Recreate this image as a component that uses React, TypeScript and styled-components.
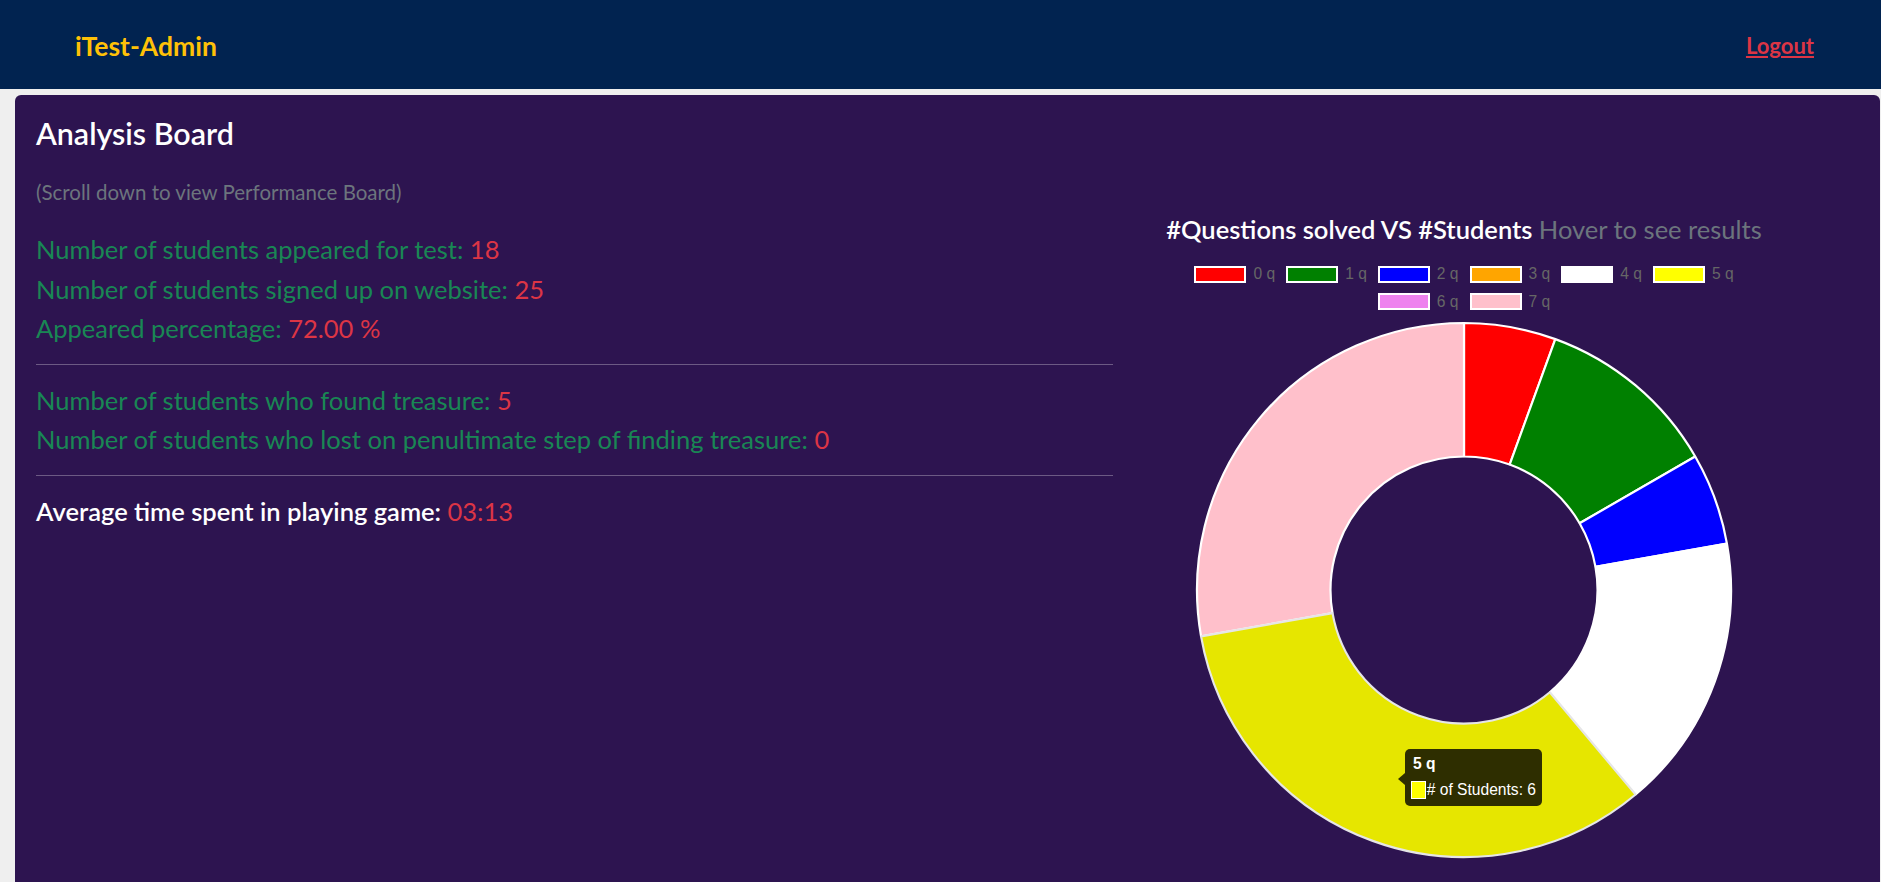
import React from 'react';
import styled, { createGlobalStyle } from 'styled-components';

const GlobalStyle = createGlobalStyle`
    body {
        margin: 0;
        background: #efefef;
        font-family: Lato, "Open Sans", sans-serif;
        overflow: hidden;
    }
`;

interface Slice {
    label: string;
    value: number;
    color: string;
}

const slices: Slice[] = [
    { label: '0 q', value: 1, color: '#ff0000' },
    { label: '1 q', value: 2, color: '#008000' },
    { label: '2 q', value: 1, color: '#0000ff' },
    { label: '3 q', value: 0, color: '#ffa500' },
    { label: '4 q', value: 3, color: '#ffffff' },
    { label: '5 q', value: 6, color: '#ffff00' },
    { label: '6 q', value: 0, color: '#ee82ee' },
    { label: '7 q', value: 5, color: '#ffc0cb' },
];

const HOVERED = 5;

const TopBar = styled.header`
    height: 89px;
    box-sizing: border-box;
    padding: 2px 67px 0 75px;
    background: #012350;
    display: flex;
    align-items: center;
    justify-content: space-between;
`;

const Brand = styled.a`
    color: #ffc107;
    font-size: 26.5px;
    font-weight: 700;
    text-decoration: none;
`;

const LogoutLink = styled.a`
    color: #dc3545;
    font-size: 22px;
    font-weight: 700;
    text-decoration: underline;
`;

const Board = styled.main`
    margin: 6px 1px 0 15px;
    height: 800px;
    box-sizing: border-box;
    padding: 21px 0 0 21px;
    background: #2d1450;
    border-radius: 6px;
    display: grid;
    grid-template-columns: 1077px 602px;
    column-gap: 50px;
    align-items: start;
`;

const Column = styled.section`
    display: flex;
    flex-direction: column;
`;

const BoardTitle = styled.h3`
    margin: 0;
    color: #ffffff;
    font-size: 30.4px;
    font-weight: 600;
    line-height: 34px;
`;

const Hint = styled.p`
    margin: 30px 0 26.4px;
    color: #6c757d;
    font-size: 20.5px;
    line-height: 24px;
`;

const StatLine = styled.div<{ $strong?: boolean }>`
    color: ${props => (props.$strong ? '#ffffff' : '#198754')};
    font-size: 25.5px;
    font-weight: ${props => (props.$strong ? 600 : 400)};
    line-height: 39.5px;
    white-space: nowrap;
`;

const StatValue = styled.span`
    color: #dc3545;
    font-weight: 400;
`;

const Divider = styled.hr`
    margin: 15px 0 16px;
    border: 0;
    border-top: 1px solid rgba(255, 255, 255, 0.3);
`;

const ChartTitle = styled.h4`
    margin: 98.5px 0 17px;
    color: #ffffff;
    font-size: 25.5px;
    font-weight: 600;
    line-height: 29px;
    text-align: center;
    white-space: nowrap;
`;

const Muted = styled.span`
    color: #6c757d;
    font-weight: 400;
`;

const Legend = styled.ul`
    margin: 0 auto;
    padding: 0;
    list-style: none;
    max-width: 560px;
    display: flex;
    flex-wrap: wrap;
    justify-content: center;
    column-gap: 11px;
    font-family: "Liberation Sans", Arial, sans-serif;
`;

const LegendItem = styled.li`
    height: 27.5px;
    display: flex;
    align-items: center;
    gap: 7px;
    color: #666666;
    font-size: 15.6px;
`;

const Swatch = styled.span<{ $color: string }>`
    width: 52px;
    height: 17px;
    box-sizing: border-box;
    background: ${props => props.$color};
    border: 2px solid #ffffff;
`;

const ChartArea = styled.div`
    position: relative;
    height: 566px;
`;

const Tooltip = styled.div`
    position: absolute;
    left: 242px;
    top: 433px;
    width: 137px;
    box-sizing: border-box;
    padding: 6.6px 6px 7px 6px;
    background: rgba(0, 0, 0, 0.8);
    border-radius: 5px;
    color: #ffffff;
    font-family: "Liberation Sans", Arial, sans-serif;
    font-size: 15.6px;
    line-height: 18px;

    &::before {
        content: '';
        position: absolute;
        left: -7px;
        top: 24px;
        border-style: solid;
        border-width: 6px 7px 6px 0;
        border-color: transparent rgba(0, 0, 0, 0.8) transparent transparent;
    }
`;

const TooltipTitle = styled.div`
    margin: 0 0 8.4px 2px;
    font-weight: 700;
`;

const TooltipBody = styled.div`
    display: flex;
    align-items: center;
    gap: 1px;
    white-space: nowrap;
`;

const TooltipSwatch = styled.span<{ $color: string }>`
    width: 17.6px;
    height: 18px;
    box-sizing: border-box;
    background: ${props => props.$color};
    border: 1.5px solid #ffffff;
`;

const CX = 301;
const CY = 274;
const OUTER = 267;
const INNER = 133.5;

const point = (deg: number, r: number) => {
    const a = (deg * Math.PI) / 180;
    return `${(CX + r * Math.sin(a)).toFixed(2)} ${(CY - r * Math.cos(a)).toFixed(2)}`;
};

const arcPath = (start: number, end: number) => {
    const large = end - start > 180 ? 1 : 0;
    return [
        `M ${point(start, OUTER)}`,
        `A ${OUTER} ${OUTER} 0 ${large} 1 ${point(end, OUTER)}`,
        `L ${point(end, INNER)}`,
        `A ${INNER} ${INNER} 0 ${large} 0 ${point(start, INNER)}`,
        'Z',
    ].join(' ');
};

const Doughnut: React.FC = () => {
    const total = slices.reduce((sum, s) => sum + s.value, 0);
    let angle = 0;
    const arcs = slices.map((s, i) => {
        const start = angle;
        angle += (s.value / total) * 360;
        return { ...s, start, end: angle, index: i };
    });
    const drawn = arcs.filter(a => a.value > 0);
    // hovered slice goes last so its grey border sits on top
    const ordered = [...drawn.filter(a => a.index !== HOVERED), ...drawn.filter(a => a.index === HOVERED)];

    return (
        <svg width="602" height="566" viewBox="0 0 602 566">
            {ordered.map(a => (
                <path
                    key={a.label}
                    d={arcPath(a.start, a.end)}
                    fill={a.index === HOVERED ? '#e6e600' : a.color}
                    stroke={a.index === HOVERED ? '#e6e6e6' : '#ffffff'}
                    strokeWidth={2.2}
                    strokeLinejoin="bevel"
                />
            ))}
        </svg>
    );
};

export default function App() {
    const hovered = slices[HOVERED];
    return (
        <>
            <GlobalStyle />
            <TopBar>
                <Brand href="#">iTest-Admin</Brand>
                <LogoutLink href="#">Logout</LogoutLink>
            </TopBar>
            <Board>
                <Column>
                    <BoardTitle>Analysis Board</BoardTitle>
                    <Hint>(Scroll down to view Performance Board)</Hint>
                    <StatLine>
                        Number of students appeared for test: <StatValue>18</StatValue>
                    </StatLine>
                    <StatLine>
                        Number of students signed up on website: <StatValue>25</StatValue>
                    </StatLine>
                    <StatLine>
                        Appeared percentage: <StatValue>72.00 %</StatValue>
                    </StatLine>
                    <Divider />
                    <StatLine>
                        Number of students who found treasure: <StatValue>5</StatValue>
                    </StatLine>
                    <StatLine>
                        Number of students who lost on penultimate step of finding treasure:{' '}
                        <StatValue>0</StatValue>
                    </StatLine>
                    <Divider />
                    <StatLine $strong>
                        Average time spent in playing game: <StatValue>03:13</StatValue>
                    </StatLine>
                </Column>
                <Column>
                    <ChartTitle>
                        #Questions solved VS #Students <Muted>Hover to see results</Muted>
                    </ChartTitle>
                    <Legend>
                        {slices.map(s => (
                            <LegendItem key={s.label}>
                                <Swatch $color={s.color} />
                                {s.label}
                            </LegendItem>
                        ))}
                    </Legend>
                    <ChartArea>
                        <Doughnut />
                        <Tooltip>
                            <TooltipTitle>{hovered.label}</TooltipTitle>
                            <TooltipBody>
                                <TooltipSwatch $color={hovered.color} />
                                # of Students: {hovered.value}
                            </TooltipBody>
                        </Tooltip>
                    </ChartArea>
                </Column>
            </Board>
        </>
    );
}
